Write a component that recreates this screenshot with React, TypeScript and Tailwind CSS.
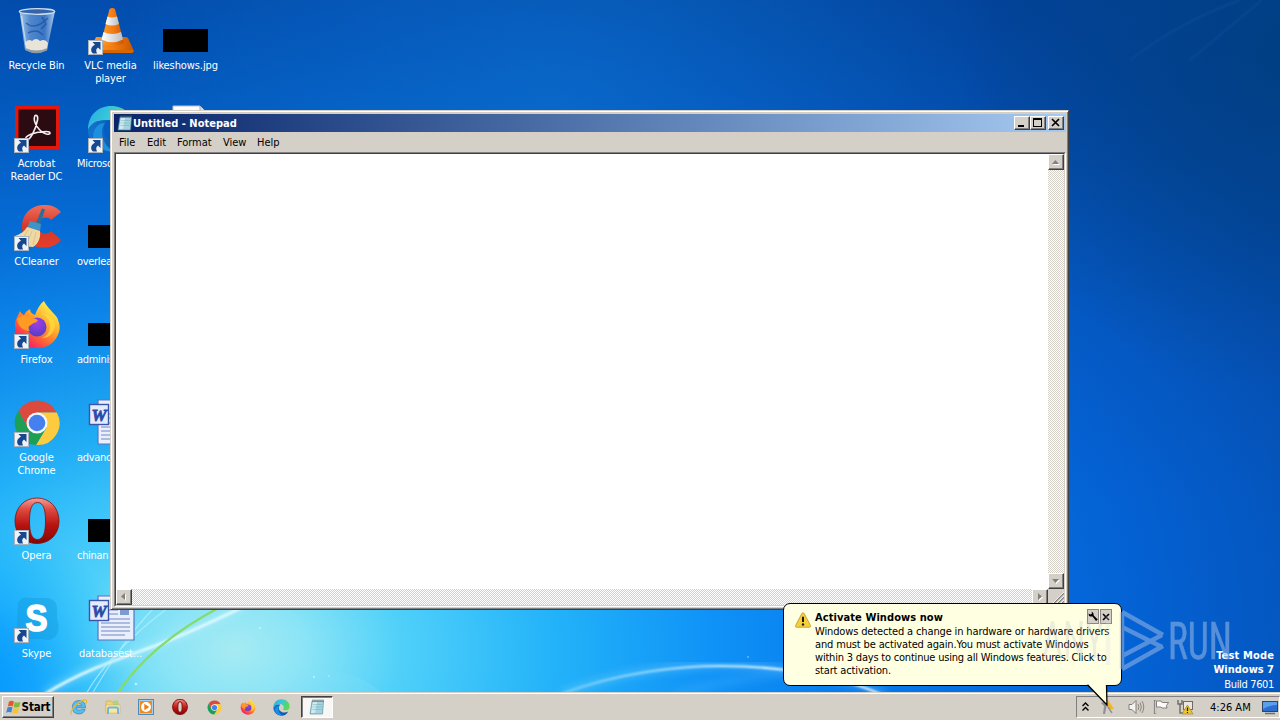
import React from 'react';

type IconProps = { size?: number };

const RecycleBin = () => (
  <svg width="48" height="48" viewBox="0 0 48 48">
    <defs>
      <linearGradient id="binGlass" x1="0" x2="1">
        <stop offset="0" stopColor="#c9def2" stopOpacity=".85" />
        <stop offset=".3" stopColor="#6a9ad6" stopOpacity=".75" />
        <stop offset=".7" stopColor="#4f86cc" stopOpacity=".7" />
        <stop offset="1" stopColor="#c6ddf2" stopOpacity=".9" />
      </linearGradient>
    </defs>
    <path d="M6.500 4 L12 43 Q23 48 34 43 L42 4 Z" fill="url(#binGlass)" />
    <path d="M12 36 Q15 31 19 34 Q23 30 27 34 Q32 31 35 36 L34 42 Q23 47 13 42 Z" fill="#e9e4d8" />
    <path d="M12.500 41 Q23 46 34.500 41 L34 43.500 Q23 49 13 43.500 Z" fill="#8d9aa8" />
    <ellipse cx="24" cy="4.500" rx="17.700" ry="2.800" fill="#3564a8" stroke="#cfe0f0" strokeWidth="1.300" />
    <path d="M13 16 Q22 24 35 11 M15 26 Q24 21 30 28 M29 10 L33 17 L28 22" fill="none" stroke="#1e4f9e" strokeWidth="1.500" opacity=".7" />
    <path d="M8.500 9 L13 38" stroke="#e5f1fb" strokeWidth="1.200" opacity=".7" />
  </svg>
);

const Vlc = () => (
  <svg width="48" height="48" viewBox="0 0 48 48">
    <defs>
      <linearGradient id="cone" x1="0" x2="1">
        <stop offset="0" stopColor="#ffa02b" />
        <stop offset=".55" stopColor="#f27a12" />
        <stop offset="1" stopColor="#c95600" />
      </linearGradient>
      <linearGradient id="coneWhite" x1="0" x2="1">
        <stop offset="0" stopColor="#ffffff" />
        <stop offset="1" stopColor="#b9bcc2" />
      </linearGradient>
    </defs>
    <path d="M9 30 L39 30 Q41 30 41.500 32 L46.500 43 Q47 46 44 46 L5 46 Q2 46 3 43 Z" fill="url(#cone)" />
    <path d="M3 43 H46.500 Q47 46 44 46 H5 Q2 46 3 43Z" fill="#d96500" />
    <path d="M22.500 2 Q25.500 0 28 2 L37 36 Q26 42 14 36 Z" fill="url(#cone)" />
    <path d="M20.500 9.500 Q25 11.500 30 9.500 L32 17 Q25 20 18.500 17 Z" fill="url(#coneWhite)" />
    <path d="M16.500 25 Q25 29 34 25 L36 32.500 Q25 38 14.500 32.500 Z" fill="url(#coneWhite)" />
  </svg>
);

const Acrobat = () => (
  <svg width="48" height="48" viewBox="0 0 48 48">
    <rect x="2" y="1" width="44.500" height="43.500" fill="#e3170a" />
    <rect x="5.500" y="4.500" width="37.500" height="36.500" fill="#2b0a12" />
    <path
      d="M13 35 C10 31 22 26.500 33 26.500 C38.500 26.500 38 30 33.500 29 C26 27 20 17 21.500 12 C22 9 25.500 10 24.500 15 C23 24 17 36 13 35 Z"
      fill="none"
      stroke="#f4eef0"
      strokeWidth="1.600"
    />
  </svg>
);

const Edge = ({ size = 48 }: IconProps) => (
  <svg width={size} height={size} viewBox="0 0 48 48">
    <defs>
      <linearGradient id="edgeTop" x1="0" x2="1" y1="0" y2=".4">
        <stop offset="0" stopColor="#2aa9e6" />
        <stop offset=".5" stopColor="#36c9d8" />
        <stop offset="1" stopColor="#5fd94e" />
      </linearGradient>
      <linearGradient id="edgeLow" x1="0" x2="1">
        <stop offset="0" stopColor="#1474cf" />
        <stop offset="1" stopColor="#104a9c" />
      </linearGradient>
    </defs>
    <path d="M1 25 C1 10 11 1 24 1 C38 1 47 11 47 21 C47 28 42 32 36 32 C30 32 28 30 29 28 C33 22 28 15 21 15 C10 15 3 20 1 25Z" fill="url(#edgeTop)" />
    <path d="M1 25 C4 17 12 14 20 16 C16 20 16 27 18 31 C22 38 34 41 43 35 C39 43 32 47 24 47 C11 47 1 37 1 25Z" fill="url(#edgeLow)" />
    <path d="M18 18 C12 26 15 42 29 46.500 C19 48 8 42 6 32 C6 24 11 18 18 18Z" fill="#1b8fe0" />
  </svg>
);

const CCleaner = () => (
  <svg width="48" height="48" viewBox="0 0 48 48">
    <defs>
      <linearGradient id="ccRed" x1="0" x2="0" y1="0" y2="1">
        <stop offset="0" stopColor="#f0705c" />
        <stop offset=".5" stopColor="#d63628" />
        <stop offset="1" stopColor="#e2402b" />
      </linearGradient>
    </defs>
    <path d="M48 9 C43 3 36 1.500 29 2 C17 3 9 12 9 23 C9 36 18 44.500 30 44.500 C38 44.500 44 42 48 37 L38 28 C35 32 26 32 25 24 C24 15 34 12 38 17Z" fill="url(#ccRed)" />
    <path d="M29 5.500 L32 6.500 L27 22 L23 20Z" fill="#2a6e9d" />
    <path d="M17 18 L28 21 L27 28 L14 25Z" fill="#3e94c8" />
    <path d="M14 24 L27 28 C28 35 25 41 20 44 C12 44 5 39 2 33 C8 31 12 28 14 24Z" fill="#eed9a4" />
    <path d="M15 27 L8 38 M19 28 L14 41 M23 29 L20 42" stroke="#dcc386" strokeWidth="1" />
  </svg>
);

const Firefox = ({ size = 48 }: IconProps) => (
  <svg width={size} height={size} viewBox="0 0 48 48">
    <defs>
      <linearGradient id="ffBody" x1=".85" y1=".1" x2=".2" y2=".95">
        <stop offset="0" stopColor="#fff44f" />
        <stop offset=".35" stopColor="#ffb02e" />
        <stop offset=".65" stopColor="#ff6a33" />
        <stop offset="1" stopColor="#f5156c" />
      </linearGradient>
      <radialGradient id="ffGlobe" cx=".5" cy=".3" r=".7">
        <stop offset="0" stopColor="#a43be8" />
        <stop offset="1" stopColor="#5340c4" />
      </radialGradient>
    </defs>
    <path d="M7 10 C8 12 9 13 11 14 C13 10 16 9 17 8 C17 11 19 13 22 14 C24 8 27 3 31 0 C33 5 38 9 42 14 C44 16 45 18 45 19 C47 23 47 28 46 31 C43 41 35 47 25 47 C11 47 2 37 2 25 C2 18 5 15 7 10Z" fill="url(#ffBody)" />
    <circle cx="24" cy="26" r="9.500" fill="url(#ffGlobe)" />
    <path d="M4 18 C9 13 15 15 18 17 C22 17 24 18 25 20 C22 22 20 22 18 24 C15 25 15 28 17 30 C11 30 5 26 4 18Z" fill="#ff9a24" />
    <path d="M28 13 C34 14 37 20 37 27 C36 32 33 36 28 37 C36 38 42 31 42 24 C41 17 35 12 28 13Z" fill="#ffdb3c" opacity=".75" />
  </svg>
);

const Chrome = ({ size = 48 }: IconProps) => (
  <svg width={size} height={size} viewBox="0 0 48 48">
    <path d="M24 13.500 H43.800 A22 22 0 0 0 5.400 12 L14.500 28.500Z" fill="#dc4a3d" />
    <path d="M33.500 28.500 L23 46 A22 22 0 0 0 43.800 13.500 H24Z" fill="#fdcb3e" />
    <path d="M14.500 28.500 L5.400 12 A22 22 0 0 0 23 46 L33.500 28.500Z" fill="#1d9f55" />
    <circle cx="24" cy="24" r="10.500" fill="#f6f8fb" />
    <circle cx="24" cy="24" r="8.300" fill="#4680ee" />
  </svg>
);

const Opera = ({ size = 48, solid = false }: IconProps & { solid?: boolean }) => (
  <svg width={size} height={size} viewBox="0 0 48 48">
    <defs>
      <linearGradient id="operaRed" x1="0" x2="0" y1="0" y2="1">
        <stop offset="0" stopColor="#f3a09a" />
        <stop offset=".25" stopColor="#dd4a40" />
        <stop offset=".6" stopColor="#b8120f" />
        <stop offset="1" stopColor="#860605" />
      </linearGradient>
    </defs>
    <path
      fillRule="evenodd"
      d={
        solid
          ? 'M24 1 C37 1 46 11 46 24 C46 37 37 46.500 24 46.500 C11 46.500 2 37 2 24 C2 11 11 1 24 1Z M24 8 C19 8 17.500 14 17.500 24 C17.500 34 19 40 24 40 C29 40 30.500 34 30.500 24 C30.500 14 29 8 24 8Z'
          : 'M24 1 C37 1 46 11 46 24 C46 37 37 46.500 24 46.500 C11 46.500 2 37 2 24 C2 11 11 1 24 1Z M24.500 5.500 C18.500 5.500 16.500 13 16.500 24 C16.500 35 18.500 42.500 24.500 42.500 C30.500 42.500 32.500 35 32.500 24 C32.500 13 30.500 5.500 24.500 5.500Z'
      }
      fill="url(#operaRed)"
      stroke="#7e1210"
      strokeWidth={solid ? 3 : 0.8}
    />
  </svg>
);

const Skype = () => (
  <svg width="48" height="48" viewBox="0 0 48 48">
    <path d="M5 8 Q9 1 17 3 H35 Q44 5 44 14 V24 Q48 34 43 41 Q38 47 29 44 H15 Q5 43 4 33Z" fill="#0f96d8" opacity=".38" />
    <text x="23.500" y="35.500" textAnchor="middle" fontFamily="Liberation Sans, sans-serif" fontSize="36" fontWeight="bold" fill="#fff" stroke="#fff" strokeWidth="1.500" textLength="22" lengthAdjust="spacingAndGlyphs">S</text>
  </svg>
);

const WordDoc = () => (
  <svg width="48" height="48" viewBox="0 0 48 48">
    <path d="M11 1 H38 L47 10 V45 H11Z" fill="#e9effc" stroke="#5874bd" strokeWidth="1.200" />
    <path d="M38 1 V10 H47" fill="#c4d2f0" stroke="#5874bd" />
    <rect x="33" y="14" width="9" height="6" fill="#7f9ad4" />
    <path d="M14 15 H31 M14 19 H31 M14 24 H43 M14 28 H43 M14 32 H43 M14 36 H43 M14 40 H38" stroke="#7288c4" strokeWidth="1.100" />
    <rect x="2.500" y="5.500" width="19" height="20" fill="#e4ecfb" stroke="#3b55ac" strokeWidth="1.400" />
    <text x="12" y="21.500" textAnchor="middle" fontFamily="Liberation Serif, serif" fontSize="17" fontWeight="bold" fontStyle="italic" fill="#2c4ba8" stroke="#2c4ba8" strokeWidth=".8">W</text>
  </svg>
);

const PlainDoc = () => (
  <svg width="48" height="48" viewBox="0 0 48 48">
    <path d="M11 1 H38 L47 10 V45 H11Z" fill="#fdfdfd" stroke="#b8c4d8" />
    <path d="M38 1 V10 H47" fill="#d5dcea" stroke="#9aa9c8" />
  </svg>
);

const BlackImage = () => (
  <div className="flex h-12 w-12 items-end pb-[3px] pl-px">
    <div className="h-[23px] w-[45px] bg-black" />
  </div>
);

const NotepadIcon = ({ size = 16 }: IconProps) => (
  <svg width={size} height={size} viewBox="0 0 16 16">
    <path d="M3 2 H14.500 L13.500 15 H1Z" fill="#a3d3de" stroke="#4c8796" strokeWidth=".6" />
    <path d="M4 3 H8 L6 14 H2Z" fill="#d7f1f5" opacity=".8" />
    <path d="M4 5.500 H13 M3.600 8 H13 M3.300 10.500 H12.500" stroke="#74adbd" strokeWidth=".5" />
    <path d="M4 .5 V3 M6 .5 V3 M8 .5 V3 M10 .5 V3 M12 .5 V3 M14 .5 V3" stroke="#55686e" strokeWidth=".9" />
  </svg>
);

const ShortcutArrow = () => (
  <svg className="absolute top-[33px] left-[1px]" width="15" height="15" viewBox="0 0 15 15">
    <rect x=".5" y=".5" width="14" height="14" fill="#eef3f8" stroke="#a9b4be" />
    <path d="M4.500 2 H12.500 V10 L10 7.600 C7.800 9 7.800 11 9 13.500 H5 C1.800 10.500 3 6.500 7 4.700Z" fill="#17478f" />
  </svg>
);

interface DesktopItem {
  label: string;
  icon: React.ReactNode;
  shortcut?: boolean;
  clipped?: boolean;
}

const columns: DesktopItem[][] = [
  [
    { label: 'Recycle Bin', icon: <RecycleBin /> },
    { label: 'Acrobat\nReader DC', icon: <Acrobat />, shortcut: true },
    { label: 'CCleaner', icon: <CCleaner />, shortcut: true },
    { label: 'Firefox', icon: <Firefox />, shortcut: true },
    { label: 'Google\nChrome', icon: <Chrome />, shortcut: true },
    { label: 'Opera', icon: <Opera />, shortcut: true },
    { label: 'Skype', icon: <Skype />, shortcut: true },
  ],
  [
    { label: 'VLC media\nplayer', icon: <Vlc />, shortcut: true },
    { label: 'Microso', icon: <Edge />, shortcut: true, clipped: true },
    { label: 'overlea', icon: <BlackImage />, clipped: true },
    { label: 'adminis', icon: <BlackImage />, clipped: true },
    { label: 'advanc', icon: <WordDoc />, clipped: true },
    { label: 'chinan', icon: <BlackImage />, clipped: true },
    { label: 'databasest...', icon: <WordDoc /> },
  ],
  [
    { label: 'likeshows.jpg', icon: <BlackImage /> },
    { label: '', icon: <PlainDoc /> },
  ],
];

const DesktopIcon = ({ item }: { item: DesktopItem }) => (
  <div className="flex h-[98px] w-[75px] flex-col items-center pt-[7px]">
    <div className="relative h-12 w-12 shrink-0">
      {item.icon}
      {item.shortcut && <ShortcutArrow />}
    </div>
    <div className={`mt-1 w-full whitespace-pre text-white ${item.clipped ? 'pl-1 text-left tracking-[-0.3px]' : 'text-center tracking-[-0.1px]'}`}>
      {item.label}
    </div>
  </div>
);

const Wallpaper = () => (
  <svg className="absolute inset-0" width="1280" height="720" viewBox="0 0 1280 720">
    <defs>
      <radialGradient id="glow" gradientUnits="userSpaceOnUse" cx="0" cy="0" r="1" gradientTransform="translate(235 650) scale(1200 860)">
        <stop offset="0" stopColor="#a6ebf3" />
        <stop offset=".06" stopColor="#8ae4f6" />
        <stop offset=".14" stopColor="#4fd0f9" />
        <stop offset=".27" stopColor="#22b2f9" />
        <stop offset=".4" stopColor="#0f92f7" />
        <stop offset=".52" stopColor="#067aec" />
        <stop offset=".75" stopColor="#0462d4" />
        <stop offset="1" stopColor="#044cac" />
      </radialGradient>
      <linearGradient id="topShade" x1="0" x2="0" y1="0" y2="1">
        <stop offset="0" stopColor="#003a88" stopOpacity=".5" />
        <stop offset=".45" stopColor="#003a88" stopOpacity=".12" />
        <stop offset=".7" stopColor="#003a88" stopOpacity="0" />
      </linearGradient>
      <radialGradient id="cornerShade" gradientUnits="userSpaceOnUse" cx="1290" cy="60" r="330">
        <stop offset="0" stopColor="#003c74" stopOpacity=".62" />
        <stop offset="1" stopColor="#003c74" stopOpacity="0" />
      </radialGradient>
      <radialGradient id="leftShade" gradientUnits="userSpaceOnUse" cx="-30" cy="690" r="170">
        <stop offset="0" stopColor="#0090ff" stopOpacity=".95" />
        <stop offset=".4" stopColor="#0098ff" stopOpacity=".7" />
        <stop offset="1" stopColor="#00b0ff" stopOpacity="0" />
      </radialGradient>
      <radialGradient id="topGlow" gradientUnits="userSpaceOnUse" cx="560" cy="90" r="440">
        <stop offset="0" stopColor="#1486e4" stopOpacity=".35" />
        <stop offset="1" stopColor="#1486e4" stopOpacity="0" />
      </radialGradient>
      <linearGradient id="arc" gradientUnits="userSpaceOnUse" x1="560" x2="900" y1="0" y2="0">
        <stop offset="0" stopColor="#9fdcff" stopOpacity=".6" />
        <stop offset=".6" stopColor="#e9f9ff" />
        <stop offset="1" stopColor="#fff" />
      </linearGradient>
      <filter id="soft"><feGaussianBlur stdDeviation="1" /></filter>
      <filter id="wide"><feGaussianBlur stdDeviation="4" /></filter>
    </defs>
    <rect width="1280" height="720" fill="url(#glow)" />
    <rect width="1280" height="720" fill="url(#topShade)" />
    <rect width="1280" height="720" fill="url(#topGlow)" />
    <rect width="1280" height="720" fill="url(#cornerShade)" />
    <rect width="1280" height="720" fill="url(#leftShade)" />
    <circle cx="326" cy="754" r="83" fill="#8ee3fb" opacity=".2" />
    <path d="M45 694 C90 666 130 656 165 642 C195 630 220 618 245 606" fill="none" stroke="#bff1ff" strokeWidth="7" opacity=".4" filter="url(#wide)" />
    <path d="M45 694 C90 666 130 656 165 642 C195 630 220 618 245 606" fill="none" stroke="#e3fbff" strokeWidth="2.600" filter="url(#soft)" />
    <path d="M86 694 C104 662 138 630 168 608 M92 694 C112 660 130 632 156 606" fill="none" stroke="#b9f1ff" strokeWidth="1.200" opacity=".7" />
    <path d="M117 694 C142 656 180 628 222 606" fill="none" stroke="#84dc6c" strokeWidth="2.400" />
    <path d="M561 694 C620 671 680 665 720 665 C750 665 770 667 786 670 C830 675 858 684 886 694" fill="none" stroke="#8fdcff" strokeWidth="6" opacity=".4" filter="url(#wide)" />
    <path d="M561 694 C620 672 680 666 720 666 C750 666 770 668 786 670 C830 675 858 684 880 694" fill="none" stroke="url(#arc)" strokeWidth="2.200" filter="url(#soft)" />
    <path d="M676 694 C710 684 750 676 786 673" fill="none" stroke="#5cc0ff" strokeWidth="8" opacity=".25" filter="url(#wide)" />
    <path d="M1130 60 C1170 30 1200 15 1240 0 M1190 60 L1262 0" fill="none" stroke="#4a98d8" strokeWidth="1.500" opacity=".15" filter="url(#soft)" />
    <g fill="#dff8ff" opacity=".7">
      <circle cx="136" cy="684" r="1.300" />
      <circle cx="260" cy="628" r="1" />
      <circle cx="314" cy="677" r="1" />
      <circle cx="329" cy="676" r=".8" />
      <circle cx="748" cy="657" r=".8" />
    </g>
  </svg>
);

const Raised = ({ className = '', children }: { className?: string; children?: React.ReactNode }) => (
  <div className={`flex shrink-0 items-center justify-center border border-t-white border-r-[#404040] border-b-[#404040] border-l-white bg-[#d4d0c8] shadow-[inset_-1px_-1px_0_#808080] ${className}`}>
    {children}
  </div>
);

const Arrow = ({ d }: { d: string }) => (
  <svg width="8" height="8" viewBox="0 0 8 8">
    <path d={d} fill="#fff" transform="translate(1 1)" />
    <path d={d} fill="#808080" />
  </svg>
);

const track = 'bg-[repeating-conic-gradient(#ffffff_0_25%,#d4d0c8_0_50%)] bg-[length:2px_2px]';

const NotepadWindow = () => (
  <div className="absolute top-[110px] left-[110px] flex h-[500px] w-[959px] flex-col border border-t-[#d4d0c8] border-r-[#404040] border-b-[#404040] border-l-[#d4d0c8] bg-[#d4d0c8] pt-[3px] pr-[2px] pb-[2px] pl-[3px] shadow-[inset_1px_1px_0_#fff,inset_-1px_-1px_0_#808080]">
    <div className="flex h-[18px] shrink-0 items-center bg-linear-to-r from-[#0a246a] to-[#a6caf0] pr-[2px] pl-[3px]">
      <NotepadIcon />
      <span className="font-bold tracking-[0.02px] text-white">Untitled - Notepad</span>
      <div className="ml-auto flex">
        <Raised className="h-[14px] w-4">
          <svg width="12" height="10" viewBox="0 0 12 10"><path d="M2 7H8V9H2Z" /></svg>
        </Raised>
        <Raised className="h-[14px] w-4">
          <svg width="12" height="10" viewBox="0 0 12 10" shapeRendering="crispEdges"><path fillRule="evenodd" d="M1 0H10V9H1ZM2 2H9V8H2Z" /></svg>
        </Raised>
        <Raised className="ml-[2px] h-[14px] w-4">
          <svg width="12" height="10" viewBox="0 0 12 10"><path d="M2 1L9 8M9 1L2 8" stroke="#000" strokeWidth="1.700" /></svg>
        </Raised>
      </div>
    </div>
    <div className="flex h-5 shrink-0 items-center tracking-[-0.05px] text-black">
      <span className="ml-[5px] w-7">File</span>
      <span className="w-[30px]">Edit</span>
      <span className="w-[46px]">Format</span>
      <span className="w-[34px]">View</span>
      <span>Help</span>
    </div>
    <div className="flex min-h-0 flex-1 flex-col border border-t-[#808080] border-r-white border-b-white border-l-[#808080]">
      <div className="flex min-h-0 flex-1 flex-col border border-t-[#404040] border-r-[#d4d0c8] border-b-[#d4d0c8] border-l-[#404040]">
        <div className="flex min-h-0 flex-1">
          <div className="flex-1 bg-white" />
          <div className={`flex w-4 flex-col justify-between ${track}`}>
            <Raised className="h-4 w-4"><Arrow d="M0 6 L3.500 2 L7 6Z" /></Raised>
            <Raised className="h-4 w-4"><Arrow d="M0 2 L3.500 6 L7 2Z" /></Raised>
          </div>
        </div>
        <div className="flex h-4 shrink-0">
          <div className={`flex flex-1 justify-between ${track}`}>
            <Raised className="h-4 w-4"><Arrow d="M5 0 L1 3.500 L5 7Z" /></Raised>
            <Raised className="h-4 w-4"><Arrow d="M2 0 L6 3.500 L2 7Z" /></Raised>
          </div>
          <svg width="16" height="16" viewBox="0 0 16 16">
            <path d="M4 16 L16 4 M8 16 L16 8 M12 16 L16 12" stroke="#808080" strokeWidth="1.500" />
            <path d="M3 16 L16 3 M7 16 L16 7 M11 16 L16 11" stroke="#fff" strokeWidth=".8" />
          </svg>
        </div>
      </div>
    </div>
  </div>
);

const WarningIcon = ({ size = 16 }: IconProps) => (
  <svg width={size} height={size} viewBox="0 0 16 16">
    <path d="M8 .8 Q8.800 .8 9.300 1.800 L15.500 13.500 Q15.800 15.200 14.500 15.200 H1.500 Q.2 15.200 .6 13.500 L6.700 1.800 Q7.200 .8 8 .8Z" fill="#f6cf3a" stroke="#b8962a" strokeWidth=".8" />
    <path d="M8 4.800 V10" stroke="#1a1a1a" strokeWidth="2" />
    <circle cx="8" cy="12.500" r="1.200" fill="#1a1a1a" />
  </svg>
);

const Balloon = () => (
  <div className="absolute top-[603px] left-[783px] h-[83px] w-[339px] rounded-[7px] border border-black bg-[#ffffe1] text-black">
    <div className="flex pt-[7px] pl-[11px]">
      <div className="mt-[1px] w-5 shrink-0"><WarningIcon /></div>
      <div className="whitespace-pre">
        <div className="font-bold tracking-[0.08px]">Activate Windows now</div>
        <div className="mt-px tracking-[-0.14px]">
          Windows detected a change in hardware or hardware drivers{'\n'}and must be activated again.You must activate Windows{'\n'}<span className="tracking-[-0.2px]">within 3 days to continue using all Windows features. Click to</span>{'\n'}start activation.
        </div>
      </div>
    </div>
    <div className="absolute top-[5px] right-[9px] flex gap-px">
      <div className="flex h-[15px] w-3 items-center justify-center border border-[#8a8782] bg-[#d4d0c8]">
        <svg width="10" height="11" viewBox="0 0 10 11">
          <path d="M.5 2.500 Q.3 5 2.500 5.500 L4.500 5.500 L8 10 L9.800 8.500 L5.800 4.500 Q6 1.500 3.500 .5 L4 2.500 L2.500 3.500Z" />
        </svg>
      </div>
      <div className="flex h-[15px] w-3 items-center justify-center border border-[#8a8782] bg-[#d4d0c8]">
        <svg width="8" height="8" viewBox="0 0 8 8"><path d="M1 1L7 7M7 1L1 7" stroke="#000" strokeWidth="1.600" /></svg>
      </div>
    </div>
    <svg className="absolute top-[80px] left-[300px]" width="30" height="24" viewBox="0 0 30 24">
      <path d="M3 0 L23 21.500 L22 0" fill="#ffffe1" />
      <path d="M3.500 .8 L23 21 L22.500 1" fill="none" stroke="#000" strokeWidth="1.300" />
    </svg>
  </div>
);

const BuildInfo = () => (
  <div className="absolute right-[6px] bottom-[28px] text-right text-white">
    <div className="font-bold leading-[14px] tracking-[0.15px]">Test Mode</div>
    <div className="font-bold leading-[14px]">Windows 7</div>
    <div className="mt-px leading-[14px] tracking-[-0.35px]">Build 7601</div>
  </div>
);

const Watermark = () => (
  <svg className="absolute top-[604px] left-[1036px]" width="210" height="80" viewBox="0 0 210 80">
    <g fontFamily="Roboto, sans-serif" fontSize="51" fontWeight="400">
      <text x="6" y="54" textLength="62" lengthAdjust="spacingAndGlyphs" fill="#b9c0cc" opacity=".26">ANY</text>
      <text x="132" y="55" textLength="64" lengthAdjust="spacingAndGlyphs" fill="#a9c4ea" stroke="#a9c4ea" strokeWidth=".5" opacity=".5">RUN</text>
    </g>
    <g fill="none" strokeWidth="4.500" opacity=".5" strokeLinejoin="round">
      <path d="M86 8 L127 31 M86 23 L126 43 M86 65 L127 42 M86 52 L126 31" stroke="#a5bfe6" />
      <path d="M86 8 V65" stroke="#a8b6d0" />
      <path d="M72 12 V61" stroke="#d6dae0" opacity=".5" />
    </g>
  </svg>
);

const WindowsFlag = () => (
  <svg width="16" height="15" viewBox="0 0 16 15">
    <path d="M3 1.500 Q5.500 0 8 1.500 L6.800 6.500 Q4.500 5.200 1.800 6.600Z" fill="#e8572a" />
    <path d="M8.800 1.900 Q11.500 3.300 14.500 1.700 L13.300 6.800 Q10.500 8.200 7.600 6.900Z" fill="#7fba3c" />
    <path d="M1.500 7.600 Q4.200 6.200 6.500 7.500 L5.300 12.500 Q2.800 11.200 .2 12.700Z" fill="#3e84d8" />
    <path d="M7.400 7.900 Q10.200 9.200 13 7.800 L11.800 12.900 Q9 14.300 6.200 12.900Z" fill="#f7c52c" />
  </svg>
);

const InternetExplorer = () => (
  <svg width="18" height="18" viewBox="0 0 18 18">
    <path d="M15.500 9.900 H6 Q6.300 12.300 9 12.300 Q10.500 12.300 11.300 11.400 H15.200 Q13.500 16 9 16 Q2.300 15.700 2.300 9.200 Q2.500 2.700 9 2.500 Q15.600 2.700 15.500 9.900Z M6.100 7.700 H11.800 Q11.300 5.600 9 5.600 Q6.700 5.600 6.100 7.700Z" fill="#58bdec" stroke="#1f78b8" strokeWidth=".6" fillRule="evenodd" />
    <path d="M1.500 16.500 Q-.5 13.500 6 7 Q13 1 16 2 Q17.500 3 15.500 6" fill="none" stroke="#e9b92e" strokeWidth="1.200" />
  </svg>
);

const Explorer = () => (
  <svg width="18" height="18" viewBox="0 0 18 18">
    <path d="M2 4 Q2 3 3 3 H7 L8 4.500 H14 V14 H2Z" fill="#efd375" stroke="#c7a546" strokeWidth=".6" />
    <rect x="9" y="2.500" width="5" height="5" fill="#a9d77a" />
    <path d="M2 7 H16 V15 H2Z" fill="#f7e7a2" stroke="#cdae56" strokeWidth=".5" />
    <path d="M4 16 V11 Q4 9.500 5.500 9.500 H12.500 Q14 9.500 14 11 V16" fill="none" stroke="#6fb7df" strokeWidth="2" />
  </svg>
);

const MediaPlayer = () => (
  <svg width="18" height="18" viewBox="0 0 18 18">
    <rect x="1.500" y="1.500" width="15" height="15" fill="#a9cdea" stroke="#4c8bc0" />
    <rect x="3" y="3" width="12" height="12" fill="#f08a1c" />
    <circle cx="9" cy="9" r="5" fill="#fff" />
    <path d="M7.300 5.800 L12.300 9 L7.300 12.200Z" fill="#f07d10" />
  </svg>
);

const Speaker = () => (
  <svg width="17" height="16" viewBox="0 0 17 16">
    <path d="M1 5.500 H4 L8 1.500 V14.500 L4 10.500 H1Z" fill="#f4f3f0" stroke="#77746f" strokeWidth=".9" />
    <path d="M10 5 Q12 8 10 11 M12 3.500 Q14.800 8 12 12.500 M14 2 Q17.500 8 14 14" fill="none" stroke="#8b8883" strokeWidth="1" />
  </svg>
);

const ActionFlag = () => (
  <svg width="16" height="16" viewBox="0 0 16 16">
    <path d="M2 1 V15" stroke="#77746f" strokeWidth="2.200" />
    <path d="M2.300 1.500 V14.500" stroke="#fff" strokeWidth=".8" />
    <path d="M3.500 2 H8 Q8.500 3.500 10 3.500 H15.500 L13.500 6.500 L14 9 H9 Q8 7.700 6.500 8 H3.500Z" fill="#fbfbfa" stroke="#77746f" strokeWidth=".9" />
  </svg>
);

const Network = () => (
  <svg width="17" height="16" viewBox="0 0 17 16">
    <path d="M1 1 V5 H5 V1 M3 5 V14 H7" fill="none" stroke="#6e6b66" strokeWidth="1.400" />
    <rect x="6.500" y="2.500" width="9" height="8" fill="#e9e7e2" stroke="#6e6b66" />
    <path d="M7 13 H15" stroke="#6e6b66" />
    <path d="M10.500 6 L16 15 H5Z" fill="#f3c628" stroke="#a8861a" strokeWidth=".7" />
    <path d="M10.500 8.500 V12 M10.500 13 V14" stroke="#222" strokeWidth="1.200" />
  </svg>
);

const quickLaunch = [
  <InternetExplorer />,
  <Explorer />,
  <MediaPlayer />,
  <Opera size={16} solid />,
  <Chrome size={15} />,
  <Firefox size={16} />,
  <Edge size={17} />,
];

const Taskbar = () => (
  <div className="flex h-7 items-center border-t border-[#d4d0c8] bg-[#d4d0c8] text-black shadow-[inset_0_1px_0_#fff]">
    <Raised className="mt-[1px] ml-[2px] h-[22px] w-[52px] font-bold">
      <WindowsFlag />
      <span className="text-[11.500px] tracking-[-0.1px]">Start</span>
    </Raised>
    <div className="mt-[1px] ml-2 flex">
      {quickLaunch.map((icon, i) => (
        <div key={i} className="flex h-[22px] w-[33.800px] items-center justify-center">{icon}</div>
      ))}
    </div>
    <div className="mt-[1px] ml-[2px] flex h-[22px] w-8 items-center justify-center border border-t-[#404040] border-r-white border-b-white border-l-[#404040] bg-[#f8f7f5] shadow-[inset_1px_1px_0_#808080]">
      <NotepadIcon />
    </div>
    <div className="mt-[1px] ml-auto flex h-[22px] w-[204px] items-center border border-t-[#808080] border-r-white border-b-white border-l-[#808080]">
      <svg className="ml-1" width="9" height="10" viewBox="0 0 9 10">
        <path d="M1.500 4 L4.500 1 L7.500 4 M1.500 8.500 L4.500 5.500 L7.500 8.500" fill="none" stroke="#000" strokeWidth="1.400" />
      </svg>
      <svg className="ml-[10px]" width="15" height="16" viewBox="0 0 15 16">
        <path d="M1 4 L5 2 L7 5 L5 15 L3 15 L4 7Z" fill="#8f9096" />
        <path d="M8 1 L14 10 H8Z" fill="#f0b52c" />
        <path d="M8 8 L12 14" stroke="#8c93a8" strokeWidth="1.500" />
      </svg>
      <div className="ml-[13px] flex items-center gap-2">
        <Speaker />
        <ActionFlag />
        <Network />
      </div>
      <span className="ml-4 w-[49px] whitespace-nowrap">4:26 AM</span>
      <svg className="ml-auto" width="18" height="16" viewBox="0 0 18 16">
        <rect x="1.500" y="2.500" width="15" height="10" fill="#2b6fd0" stroke="#2d4568" />
        <path d="M2 3 H16 V6 Q9 6 2 10Z" fill="#5aa0ec" />
        <path d="M4 14.500 H14" stroke="#68707c" strokeWidth="1.500" />
      </svg>
    </div>
  </div>
);

export default function App() {
  return (
    <div className="relative flex h-[720px] w-[1280px] flex-col overflow-hidden bg-[#0565d8] font-['DejaVu_Sans_Condensed','DejaVu_Sans',sans-serif] text-[11px] leading-[13px] [font-stretch:condensed]">
      <Wallpaper />
      <div className="relative -ml-px flex h-[692px]">
        {columns.map((items, i) => (
          <div key={i} className={`flex flex-col ${i === 1 ? '-ml-px' : ''}`}>
            {items.map((item, j) => (
              <DesktopIcon key={j} item={item} />
            ))}
          </div>
        ))}
      </div>
      <div className="relative">
        <Taskbar />
      </div>
      <BuildInfo />
      <NotepadWindow />
      <Balloon />
      <Watermark />
    </div>
  );
}
